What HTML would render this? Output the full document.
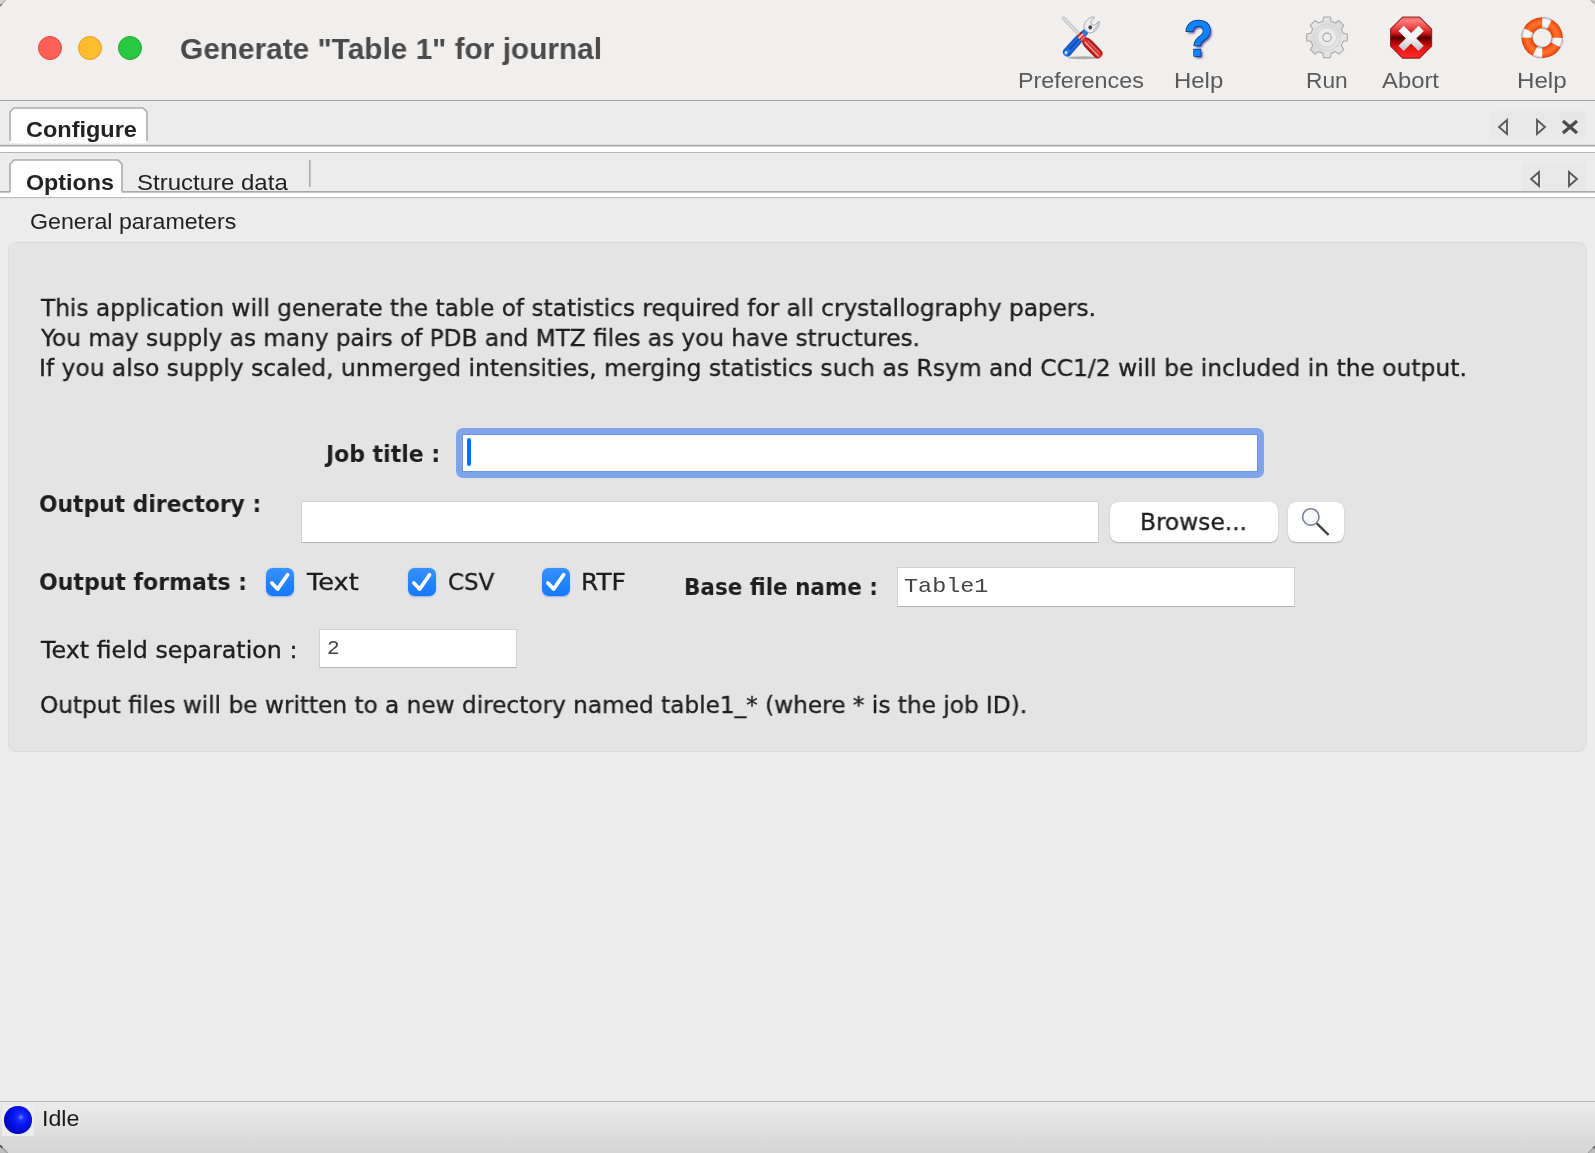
<!DOCTYPE html>
<html lang="en">
<head>
<meta charset="utf-8">
<title>Generate "Table 1" for journal</title>
<style>
html,body{margin:0;padding:0;}
body{width:1595px;height:1153px;overflow:hidden;background:#ececec;position:relative;
  font-family:"DejaVu Sans","Liberation Sans",sans-serif;color:#1e1e1e;}
.abs{position:absolute;}
.t{position:absolute;white-space:pre;line-height:1;will-change:transform;}
.sf{font-family:"Liberation Sans",sans-serif;}
.dv{font-family:"DejaVu Sans","Liberation Sans",sans-serif;-webkit-text-stroke:0.35px currentColor;}
.mono{font-family:"Liberation Mono",monospace;}
.b{font-weight:bold;-webkit-text-stroke:0 !important;}
#toolbar{left:0;top:0;width:1595px;height:100px;background:#f0efed;}
#tbline{left:0;top:99.7px;width:1595px;height:1.5px;background:#a4a4a4;}
.light{width:24px;height:24px;border-radius:50%;top:36px;box-sizing:border-box;}
.tl{color:#4f4f4f;font-size:22px;}
.hline{left:0;width:1595px;}
.field{background:#fff;box-sizing:border-box;border:1px solid #d2d2d2;border-bottom-color:#b4b4b4;}
.btn{background:#fff;border-radius:8px;box-shadow:0 1px 1.5px rgba(0,0,0,0.22),0 0 0.5px rgba(0,0,0,0.25);}
.cb{width:28px;height:28px;border-radius:6.5px;background:linear-gradient(#3690ff,#1479ff);box-shadow:0 0.5px 1.5px rgba(20,80,200,0.35);}
</style>
</head>
<body>

<!-- ===== title bar / toolbar ===== -->
<div id="toolbar" class="abs"></div>
<div id="tbline" class="abs"></div>
<div class="abs light" style="left:38px;background:#fe5f57;border:1px solid #e2463f;"></div>
<div class="abs light" style="left:78px;background:#febc2e;border:1px solid #e0a028;"></div>
<div class="abs light" style="left:118px;background:#28c840;border:1px solid #1eab2f;"></div>
<div id="title" class="t sf b" style="left:180.33px;top:32.80px;font-size:30.4px;color:#4a4a4a;transform:scale(0.9810,1);transform-origin:0 0;">Generate "Table 1" for journal</div>

<svg class="abs" style="left:0;top:0;" width="1595" height="8" viewBox="0 0 1595 8">
 <path d="M0 0 L5.6 0 L0 6.4 Z" fill="#d6d6d6"/><path d="M0 6.2 L2.2 3.6" stroke="#777" stroke-width="1.4" fill="none"/><path d="M2.2 3.6 L5.4 0" stroke="#b4b4b4" stroke-width="1.2" fill="none"/>
 <path d="M1595 0 L1590.2 0 L1595 4.6 Z" fill="#cdcdcd"/><path d="M1590.8 0 L1595 4" stroke="#aeaeae" stroke-width="1.2" fill="none"/>
</svg>
<!-- toolbar labels -->
<div id="l1" class="t sf tl" style="left:1018.33px;top:69.80px;font-size:22px;color:#5a5a5a;transform:scale(1.0615,1);transform-origin:0 0;">Preferences</div>
<div id="l2" class="t sf tl" style="left:1174.39px;top:69.80px;font-size:22px;color:#5a5a5a;transform:scale(1.0881,1);transform-origin:0 0;">Help</div>
<div id="l3" class="t sf tl" style="left:1306.39px;top:69.80px;font-size:22px;color:#5a5a5a;transform:scale(1.0320,1);transform-origin:0 0;">Run</div>
<div id="l4" class="t sf tl" style="left:1381.51px;top:69.80px;font-size:22px;color:#5a5a5a;transform:scale(1.0828,1);transform-origin:0 0;">Abort</div>
<div id="l5" class="t sf tl" style="left:1517.27px;top:69.80px;font-size:22px;color:#5a5a5a;transform:scale(1.0975,1);transform-origin:0 0;">Help</div>


<svg class="abs" style="left:1050px;top:8px;" width="540" height="60" viewBox="1050 8 540 60">
 <defs>
  <linearGradient id="gRed" x1="0" y1="0" x2="0" y2="1">
   <stop offset="0" stop-color="#e86060"/><stop offset="0.08" stop-color="#ff8080"/><stop offset="0.25" stop-color="#f04848"/>
   <stop offset="0.40" stop-color="#cc1414"/><stop offset="0.505" stop-color="#560000"/><stop offset="0.57" stop-color="#8c0202"/>
   <stop offset="0.74" stop-color="#e41212"/><stop offset="1" stop-color="#ff2c2c"/>
  </linearGradient>
  <linearGradient id="gX" x1="0" y1="0" x2="0" y2="1">
   <stop offset="0" stop-color="#ffffff"/><stop offset="0.5" stop-color="#f4f4f4"/><stop offset="1" stop-color="#c9c9c9"/>
  </linearGradient>
  <linearGradient id="gGear" x1="0" y1="0" x2="1" y2="1">
   <stop offset="0" stop-color="#efefef"/><stop offset="0.45" stop-color="#dadada"/><stop offset="0.7" stop-color="#e4e4e4"/><stop offset="1" stop-color="#e9e9e9"/>
  </linearGradient>
  <linearGradient id="gQ" x1="0" y1="0" x2="0" y2="1">
   <stop offset="0" stop-color="#1f86ff"/><stop offset="1" stop-color="#0a6ef0"/>
  </linearGradient>
  <linearGradient id="gBlue" x1="0" y1="0" x2="1" y2="0">
   <stop offset="0" stop-color="#0b4fc4"/><stop offset="0.5" stop-color="#2a80f0"/><stop offset="1" stop-color="#0b4fc4"/>
  </linearGradient>
  <linearGradient id="gRedH" x1="0" y1="0" x2="1" y2="0">
   <stop offset="0" stop-color="#9c1010"/><stop offset="0.45" stop-color="#e03a34"/><stop offset="1" stop-color="#a01212"/>
  </linearGradient>
  <radialGradient id="gOr" cx="0.5" cy="0.5" r="0.5">
   <stop offset="0.5" stop-color="#e0440c"/><stop offset="0.75" stop-color="#ff6a24"/><stop offset="1" stop-color="#e04a10"/>
  </radialGradient>
 </defs>

 <!-- Preferences: wrench + screwdriver -->
 <g id="ic-pref">
  <ellipse cx="1083.2" cy="57.7" rx="15.5" ry="1.5" fill="#7e7e7e" opacity="0.6"/>
  <!-- wrench -->
  <g transform="translate(1092.2 24.3) rotate(41.8)">
   <path d="M-2.6 6 L2.6 6 L4.3 22 L4.4 38 C4.4 43 -4.4 43 -4.4 38 L-4.3 22 Z" fill="url(#gBlue)"/>
   <path d="M-0.8 14 L0.6 14 L1 34 L-1.2 34 Z" fill="#0a3aa6" opacity="0.8"/>
   <circle cx="-0.6" cy="38.6" r="1.5" fill="#d6e6ff"/>
   <g transform="translate(0 1.2) scale(0.86 0.9)"><path d="M-3.2 8.5 C-8.5 6 -9 -3 -5.5 -7.5 L-3.4 -9 L-3 -2.2 L0 -0.6 L3 -2.2 L3.4 -9 L5.5 -7.5 C9 -3 8.5 6 3.2 8.5 Z" fill="#ededf0" stroke="#a4a4aa" stroke-width="1" stroke-linejoin="round"/>
   <path d="M3.6 -8 L5.5 -3 L6 3" fill="none" stroke="#b8b8be" stroke-width="1.3"/></g>
   <circle cx="0.6" cy="3.6" r="1.9" fill="#3e3e42"/>
  </g>
  <!-- screwdriver -->
  <g transform="translate(1079.4 34.6) rotate(-44)">
   <rect x="-1.45" y="-24" width="2.9" height="24" rx="0.8" fill="#dcdce0" stroke="#a6a6ac" stroke-width="0.6"/>
   <path d="M-3.1 -1 L3.1 -1 L3.1 7 C4.8 9 4.8 12 4.8 14 L4.8 27 C4.8 32.5 -4.8 32.5 -4.8 27 L-4.8 14 C-4.8 12 -4.8 9 -3.1 7 Z" fill="url(#gRedH)"/>
   <rect x="-3.3" y="1.2" width="6.6" height="1.8" fill="#ffe0e0" opacity="0.8"/>
   <rect x="-3.3" y="4.6" width="6.6" height="1.2" fill="#ffe0e0" opacity="0.55"/>
   <rect x="-1.9" y="9" width="1.3" height="20" fill="#ffd0d0" opacity="0.75"/>
   <rect x="1.3" y="10" width="1.1" height="18" fill="#ffb0b0" opacity="0.5"/>
  </g>
 </g>

 <!-- Help: blue question mark -->
 <filter id="fBlur" x="-20%" y="-20%" width="140%" height="140%"><feGaussianBlur stdDeviation="0.9"/></filter>
 <g transform="translate(1198.3 56.2) scale(0.93 1)" font-family="Liberation Sans, sans-serif" font-weight="bold" font-size="50.4" text-anchor="middle">
  <text x="1.9" y="1.7" fill="#2a1f96" opacity="0.8" filter="url(#fBlur)">?</text>
  <text x="0" y="0" fill="#0a84ff" stroke="#13306e" stroke-width="1.5" paint-order="stroke" stroke-linejoin="round">?</text>
 </g>

 <!-- Run: gear -->
 <g transform="translate(1327 37.3)">
  <path d="M-4.11 -16.08 L-3.38 -20.32 L3.38 -20.32 L4.11 -16.08 L8.47 -14.28 L11.98 -16.76 L16.76 -11.98 L14.28 -8.47 L16.08 -4.11 L20.32 -3.38 L20.32 3.38 L16.08 4.11 L14.28 8.47 L16.76 11.98 L11.98 16.76 L8.47 14.28 L4.11 16.08 L3.38 20.32 L-3.38 20.32 L-4.11 16.08 L-8.47 14.28 L-11.98 16.76 L-16.76 11.98 L-14.28 8.47 L-16.08 4.11 L-20.32 3.38 L-20.32 -3.38 L-16.08 -4.11 L-14.28 -8.47 L-16.76 -11.98 L-11.98 -16.76 L-8.47 -14.28 Z" fill="url(#gGear)" stroke="#a9a9a9" stroke-width="1.1" stroke-linejoin="round"/>
  <circle r="13.2" fill="none" stroke="#d6d6d6" stroke-width="1.2"/>
  <circle r="9.6" fill="#ebebeb" stroke="#d4d4d4" stroke-width="0.9"/>
  <circle r="4.2" fill="#f0efed" stroke="#a4a4a4" stroke-width="1.1"/>
 </g>

 <!-- Abort: red octagon with X -->
 <g transform="translate(1411.1 37.6)">
  <path d="M20.56 8.51 L8.51 20.56 L-8.51 20.56 L-20.56 8.51 L-20.56 -8.51 L-8.51 -20.56 L8.51 -20.56 L20.56 -8.51 Z" fill="url(#gRed)" stroke="#8e1010" stroke-opacity="0.85" stroke-width="1.1" stroke-linejoin="round"/>
  <path d="M-10 -9.2 L10 10.8 M10 -9.2 L-10 10.8" stroke="url(#gX)" stroke-width="7.4" stroke-linecap="butt" fill="none"/>
 </g>

 <!-- Help: lifebuoy -->
 <g transform="translate(1542.2 37.7) rotate(14) scale(1 0.98)">
  <circle r="15.3" fill="none" stroke="#e2480e" stroke-width="11"/>
  <circle r="15.3" fill="none" stroke="#f85c18" stroke-width="8"/>
  <circle r="15.3" fill="none" stroke="#ff6e2c" stroke-width="4"/>
  <g fill="none">
   <g stroke="#cfd2d8" stroke-width="11"><path d="M-3.57 -14.88 A15.3 15.3 0 0 1 3.57 -14.88"/><path d="M-3.57 -14.88 A15.3 15.3 0 0 1 3.57 -14.88" transform="rotate(90)"/><path d="M-3.57 -14.88 A15.3 15.3 0 0 1 3.57 -14.88" transform="rotate(180)"/><path d="M-3.57 -14.88 A15.3 15.3 0 0 1 3.57 -14.88" transform="rotate(270)"/></g>
   <g stroke="#f7f7f8" stroke-width="7.5"><path d="M-3.57 -14.88 A15.3 15.3 0 0 1 3.57 -14.88"/><path d="M-3.57 -14.88 A15.3 15.3 0 0 1 3.57 -14.88" transform="rotate(90)"/><path d="M-3.57 -14.88 A15.3 15.3 0 0 1 3.57 -14.88" transform="rotate(180)"/><path d="M-3.57 -14.88 A15.3 15.3 0 0 1 3.57 -14.88" transform="rotate(270)"/></g>
  </g>
  <circle r="21" fill="none" stroke="#a9aec2" stroke-width="0.7" opacity="0.75" stroke-dasharray="9 24" stroke-dashoffset="4.5"/>
  <circle r="9.7" fill="none" stroke="#9a4a30" stroke-width="0.8" opacity="0.55"/>
 </g>
</svg>


<!-- ===== outer tab row ===== -->

<!-- outer notebook tab: Configure -->
<svg class="abs" style="left:0;top:101px;" width="1595" height="100" viewBox="0 101 1595 100">
  <!-- outer line pair -->
  <rect x="0" y="144.8" width="1595" height="1.9" fill="#a9a9a9"/>
  <rect x="0" y="146.7" width="1595" height="5.3" fill="#ffffff"/>
  <rect x="0" y="152" width="1595" height="1" fill="#b6b6b6"/>
  <!-- Configure tab -->
  <path d="M10 143.2 L10 112 L14 108 L143 108 L147 112 L147 143.2 Z" fill="#ffffff"/>
  <path d="M10 141 L10 112 L14 108 L143 108 L147 112 L147 141" fill="none" stroke="#adadad" stroke-width="1.6"/>
  <!-- inner line pair -->
  <rect x="0" y="191" width="1595" height="1.8" fill="#a9a9a9"/>
  <rect x="0" y="192.8" width="1595" height="4.3" fill="#ffffff"/>
  <rect x="0" y="197.1" width="1595" height="1" fill="#b6b6b6"/>
  <!-- Options tab -->
  <path d="M10 197 L10 164 L14 160 L118 160 L122 164 L122 193 L10 193 Z" fill="#ffffff"/>
  <path d="M10 192 L10 164 L14 160 L118 160 L122 164 L122 191" fill="none" stroke="#ababab" stroke-width="1.6"/>
  <!-- separator after Structure data -->
  <rect x="309" y="160" width="1.6" height="27" fill="#ababab"/>
  <!-- nav boxes -->
  <rect x="1489" y="111" width="97" height="28" fill="#e8e8e8"/>
  <rect x="1522" y="163" width="64" height="27" fill="#e8e8e8"/>
  <g fill="none" stroke="#555" stroke-width="1.8" stroke-linejoin="miter">
    <path d="M1507 120 L1507 134 L1499 127 Z"/>
    <path d="M1537 120 L1537 134 L1545 127 Z"/>
    <path d="M1539 172 L1539 186 L1531 179 Z"/>
    <path d="M1569 172 L1569 186 L1577 179 Z"/>
  </g>
  <path d="M1563 121 L1577 133 M1577 121 L1563 133" stroke="#4a4a4a" stroke-width="3.2" fill="none"/>
</svg>
<div id="tconf" class="t sf b" style="left:25.98px;top:119.20px;font-size:22px;color:#222;transform:scale(1.0670,1);transform-origin:0 0;">Configure</div>
<div id="topt" class="t sf b" style="left:25.99px;top:171.50px;font-size:22px;color:#222;transform:scale(1.0591,1);transform-origin:0 0;">Options</div>
<div id="tstr" class="t sf" style="left:137.32px;top:171.50px;font-size:22px;color:#222;transform:scale(1.0908,1);transform-origin:0 0;">Structure data</div>
<div id="tgen" class="t sf" style="left:30.08px;top:211.20px;font-size:22px;color:#222;transform:scale(1.0543,1);transform-origin:0 0;">General parameters</div>


<!-- ===== panel ===== -->

<div id="panel" class="abs" style="left:8px;top:242px;width:1579px;height:510px;box-sizing:border-box;background:#e4e4e4;border:1px solid #dcdcdc;border-radius:8px;"></div>

<div id="p1" class="t dv" style="left:40.75px;top:296.60px;font-size:23.6px;color:#1e1e1e;transform:scale(0.9850,1);transform-origin:0 0;">This application will generate the table of statistics required for all crystallography papers.</div>
<div id="p2" class="t dv" style="left:40.61px;top:326.60px;font-size:23.6px;color:#1e1e1e;transform:scale(0.9815,1);transform-origin:0 0;">You may supply as many pairs of PDB and MTZ files as you have structures.</div>
<div id="p3" class="t dv" style="left:39.23px;top:356.70px;font-size:23.6px;color:#1e1e1e;transform:scale(0.9909,1);transform-origin:0 0;">If you also supply scaled, unmerged intensities, merging statistics such as Rsym and CC1/2 will be included in the output.</div>

<div id="jt" class="t dv b" style="left:326.11px;top:442.60px;font-size:23.6px;color:#1e1e1e;transform:scale(0.9319,1);transform-origin:0 0;">Job title :</div>
<!-- focused job title field -->
<div class="abs" style="left:456px;top:428px;width:808px;height:50px;box-sizing:border-box;border-radius:7px;background:#7fa4ea;"></div>
<div class="abs" style="left:462px;top:434px;width:796px;height:38px;box-sizing:border-box;background:#fff;border:1px solid #6b93e3;"></div>
<div class="abs" style="left:467px;top:438px;width:4px;height:28px;border-radius:2px;background:#0a6cff;"></div>

<div id="od" class="t dv b" style="left:39.49px;top:493.10px;font-size:23.6px;color:#1e1e1e;transform:scale(0.9252,1);transform-origin:0 0;">Output directory :</div>
<div class="abs field" style="left:301px;top:501px;width:798px;height:42px;"></div>
<div class="abs btn" style="left:1110px;top:502px;width:168px;height:40px;"></div>
<div id="br" class="t dv" style="left:1140.34px;top:511.00px;font-size:23.6px;color:#1e1e1e;transform:scale(0.9860,1);transform-origin:0 0;">Browse...</div>
<div class="abs btn" style="left:1288px;top:502px;width:56px;height:40px;"></div>
<svg class="abs" style="left:1296px;top:504px;" width="40" height="36" viewBox="0 0 40 36">
  <circle cx="14.8" cy="12.9" r="8.2" fill="#f6fafd" stroke="#7a8296" stroke-width="1.6"/>
  <path d="M20.8 19.3 L32.6 31" stroke="#404040" stroke-width="2.4" stroke-linecap="butt"/>
</svg>

<div id="of" class="t dv b" style="left:39.48px;top:571.00px;font-size:23.6px;color:#1e1e1e;transform:scale(0.9330,1);transform-origin:0 0;">Output formats :</div>
<div class="abs cb" style="left:266px;top:568px;"></div>
<div class="abs cb" style="left:408px;top:568px;"></div>
<div class="abs cb" style="left:542px;top:568px;"></div>
<svg class="abs" style="left:266px;top:568px;" width="310" height="28" viewBox="0 0 310 28">
  <g fill="none" stroke="#fff" stroke-width="3.7" stroke-linecap="round" stroke-linejoin="round">
    <path d="M5.9 14.9 L11.6 21.1 L21.6 6.8"/>
    <path d="M147.9 14.9 L153.6 21.1 L163.6 6.8"/>
    <path d="M281.9 14.9 L287.6 21.1 L297.6 6.8"/>
  </g>
</svg>
<div id="c1" class="t dv" style="left:306.56px;top:571.10px;font-size:23.6px;color:#1e1e1e;transform:scale(1.0832,1);transform-origin:0 0;">Text</div>
<div id="c2" class="t dv" style="left:447.63px;top:571.10px;font-size:23.6px;color:#1e1e1e;transform:scale(0.9701,1);transform-origin:0 0;">CSV</div>
<div id="c3" class="t dv" style="left:580.91px;top:571.10px;font-size:23.6px;color:#1e1e1e;transform:scale(1.0515,1);transform-origin:0 0;">RTF</div>
<div id="bf" class="t dv b" style="left:683.54px;top:576.10px;font-size:23.6px;color:#1e1e1e;transform:scale(0.9105,1);transform-origin:0 0;">Base file name :</div>
<div class="abs field" style="left:897px;top:567px;width:398px;height:40px;"></div>
<div id="tb1" class="t mono" style="left:904.24px;top:576.30px;font-size:21px;color:#444;transform:scale(1.1165,1);transform-origin:0 0;">Table1</div>

<div id="ts" class="t dv" style="left:40.55px;top:638.60px;font-size:23.6px;color:#1e1e1e;transform:scale(1.0068,1);transform-origin:0 0;">Text field separation :</div>
<div class="abs field" style="left:319px;top:629px;width:198px;height:39px;"></div>
<div id="two" class="t mono" style="left:327.01px;top:637.60px;font-size:21px;color:#444;transform:scale(0.9920,1);transform-origin:0 0;">2</div>

<div id="ofw" class="t dv" style="left:39.82px;top:694.30px;font-size:23.6px;color:#1e1e1e;transform:scale(0.9835,1);transform-origin:0 0;">Output files will be written to a new directory named table1_* (where * is the job ID).</div>


<!-- ===== status bar ===== -->

<div class="abs" style="left:0;top:1101px;width:1595px;height:52px;background:linear-gradient(#ebebeb,#e3e3e3 40%,#dbdbdb 70%,#d5d5d5);"></div>
<div class="abs" style="left:0;top:1100.7px;width:1595px;height:1.5px;background:#b8b8b8;"></div>
<div class="abs" style="left:2px;top:1105px;width:32px;height:31px;background:#ededed;"></div>
<div class="abs" style="left:4.3px;top:1106.2px;width:27.4px;height:27.4px;border-radius:50%;background:radial-gradient(circle at 60% 40%,#7088ff 0%,#1a30ff 13%,#0418f4 32%,#0008cc 62%,#00008a 100%);"></div>
<!-- window bottom corners -->
<svg class="abs" style="left:0;top:1143px;" width="1595" height="10" viewBox="0 0 1595 10">
 <path d="M0 2.6 L7.2 10 L0 10 Z" fill="#bdbdbd"/><path d="M0 2.4 L2.4 4.8" stroke="#3c3c3c" stroke-width="1.5" fill="none"/><path d="M2.4 4.8 L7.6 10" stroke="#9a9a9a" stroke-width="1.3" fill="none"/>
 <path d="M1595 3.4 L1588.6 10 L1595 10 Z" fill="#bdbdbd"/><path d="M1595 3.2 L1593 5.2" stroke="#4a4a4a" stroke-width="1.5" fill="none"/><path d="M1593 5.2 L1588.2 10" stroke="#a0a0a0" stroke-width="1.3" fill="none"/>
</svg>
<div id="idle" class="t sf" style="left:41.59px;top:1107.70px;font-size:22px;color:#1a1a1a;transform:scale(1.0545,1);transform-origin:0 0;">Idle</div>


</body>
</html>
